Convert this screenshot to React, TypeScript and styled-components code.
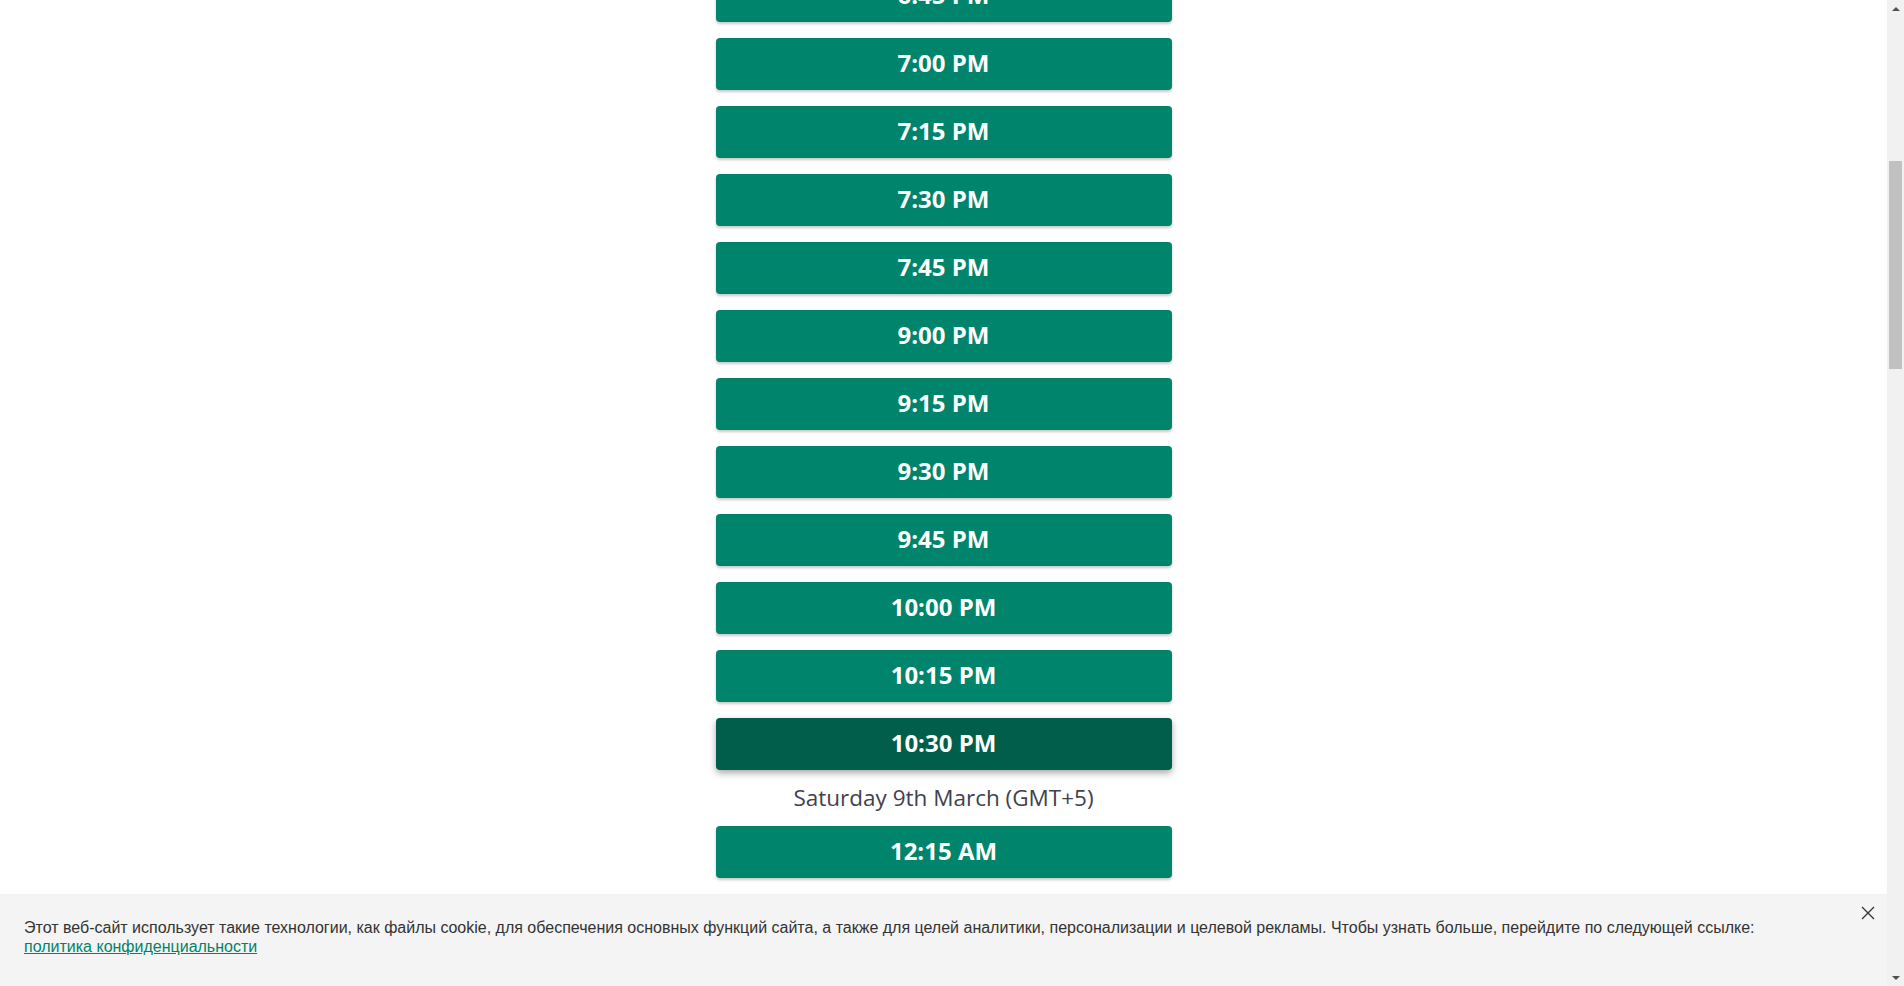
import { useLayoutEffect, useRef } from 'react';
import styled, { createGlobalStyle } from 'styled-components';

const GlobalStyle = createGlobalStyle`
  html, body {
    margin: 0;
    padding: 0;
    background: #fff;
  }
  * {
    box-sizing: border-box;
  }
`;

const Page = styled.div`
  height: 100vh;
  display: flex;
  overflow: hidden;
`;

const Viewport = styled.div`
  position: relative;
  flex: 1;
  min-width: 0;
`;

const Scroller = styled.div`
  height: 100%;
  overflow-y: scroll;
  scrollbar-width: none;

  &::-webkit-scrollbar {
    display: none;
  }
`;

const ScrollRail = styled.div`
  width: 17px;
  background: #f1f1f1;
  display: flex;
  flex-direction: column;
`;

const RailArrow = styled.div<{ $down?: boolean }>`
  height: 17px;
  display: flex;
  align-items: center;
  justify-content: center;

  &::after {
    content: '';
    border-left: 4px solid transparent;
    border-right: 4px solid transparent;
    ${(p) => (p.$down ? 'border-top: 4px solid #505050;' : 'border-bottom: 4px solid #505050;')}
  }
`;

const RailTrack = styled.div`
  flex: 1;
  padding: 0 2px;
`;

const RailThumb = styled.div`
  margin-top: 144px;
  height: 208px;
  background: #c1c1c1;
`;

const SlotList = styled.div`
  width: 456px;
  margin: 0 auto;
  padding: 69px 0 28px;
  display: flex;
  flex-direction: column;
  gap: 16px;
`;

const DayLabel = styled.div`
  height: 24px;
  line-height: 24px;
  text-align: center;
  font-family: 'Open Sans', 'Liberation Sans', sans-serif;
  font-size: 22.5px;
  font-weight: 500;
  color: #41414f;
`;

const SlotButton = styled.button<{ $selected?: boolean }>`
  height: 52px;
  width: 100%;
  border: none;
  border-radius: 4px;
  padding: 0 0 3px;
  background: ${(p) => (p.$selected ? '#005e4b' : '#00846c')};
  color: #fff;
  font-family: 'Open Sans', 'Liberation Sans', sans-serif;
  font-size: 24px;
  font-weight: 700;
  cursor: pointer;
  box-shadow: ${(p) =>
    p.$selected ? '0 3px 7px rgba(0, 0, 0, 0.35)' : '0 2px 3px rgba(0, 0, 0, 0.22)'};
`;

const CookieBar = styled.div`
  position: absolute;
  left: 0;
  right: 0;
  bottom: 0;
  height: 92px;
  background: #f4f4f4;
  padding: 24px 80px 0 24px;
  font-family: 'Liberation Sans', Arial, sans-serif;
  font-size: 16px;
  line-height: 19px;
  color: #333;
`;

const CookieText = styled.p`
  margin: 0;

  a {
    color: #00836b;
    text-decoration: underline;
  }
`;

const CloseButton = styled.button`
  position: absolute;
  top: 10px;
  right: 10px;
  width: 18px;
  height: 18px;
  padding: 0;
  border: none;
  background: transparent;
  display: flex;
  align-items: center;
  justify-content: center;
  cursor: pointer;
`;

const days = [
  {
    label: 'Friday 8th March (GMT+5)',
    times: [
      '4:45 PM', '5:00 PM', '5:15 PM', '5:30 PM', '5:45 PM', '6:00 PM', '6:15 PM', '6:30 PM',
      '6:45 PM', '7:00 PM', '7:15 PM', '7:30 PM', '7:45 PM', '9:00 PM', '9:15 PM', '9:30 PM',
      '9:45 PM', '10:00 PM', '10:15 PM', '10:30 PM',
    ],
  },
  {
    label: 'Saturday 9th March (GMT+5)',
    times: Array.from({ length: 44 }, (_, i) => {
      const mins = 15 + i * 15;
      const h = Math.floor(mins / 60);
      const m = mins % 60;
      const hh = h === 0 ? 12 : h;
      return `${hh}:${m.toString().padStart(2, '0')} AM`;
    }),
  },
];

const selectedSlot = 'Friday 8th March (GMT+5)|10:30 PM';

export default function App() {
  const scrollRef = useRef<HTMLDivElement>(null);

  useLayoutEffect(() => {
    if (scrollRef.current) scrollRef.current.scrollTop = 683;
  }, []);

  return (
    <Page>
      <GlobalStyle />
      <Viewport>
        <Scroller ref={scrollRef}>
          <SlotList>
            {days.map((day) => [
              <DayLabel key={day.label}>{day.label}</DayLabel>,
              ...day.times.map((t) => (
                <SlotButton key={day.label + t} $selected={`${day.label}|${t}` === selectedSlot}>
                  {t}
                </SlotButton>
              )),
            ])}
          </SlotList>
        </Scroller>
        <CookieBar>
          <CookieText>
            Этот веб-сайт использует такие технологии, как файлы cookie, для обеспечения основных
            функций сайта, а также для целей аналитики, персонализации и целевой рекламы. Чтобы
            узнать больше, перейдите по следующей ссылке:{' '}
            <a href="#">политика конфиденциальности</a>
          </CookieText>
          <CloseButton aria-label="Закрыть">
            <svg width="14" height="14" viewBox="0 0 14 14">
              <path d="M1 1L13 13M13 1L1 13" stroke="#333" strokeWidth="1.3" />
            </svg>
          </CloseButton>
        </CookieBar>
      </Viewport>
      <ScrollRail>
        <RailArrow />
        <RailTrack>
          <RailThumb />
        </RailTrack>
        <RailArrow $down />
      </ScrollRail>
    </Page>
  );
}
